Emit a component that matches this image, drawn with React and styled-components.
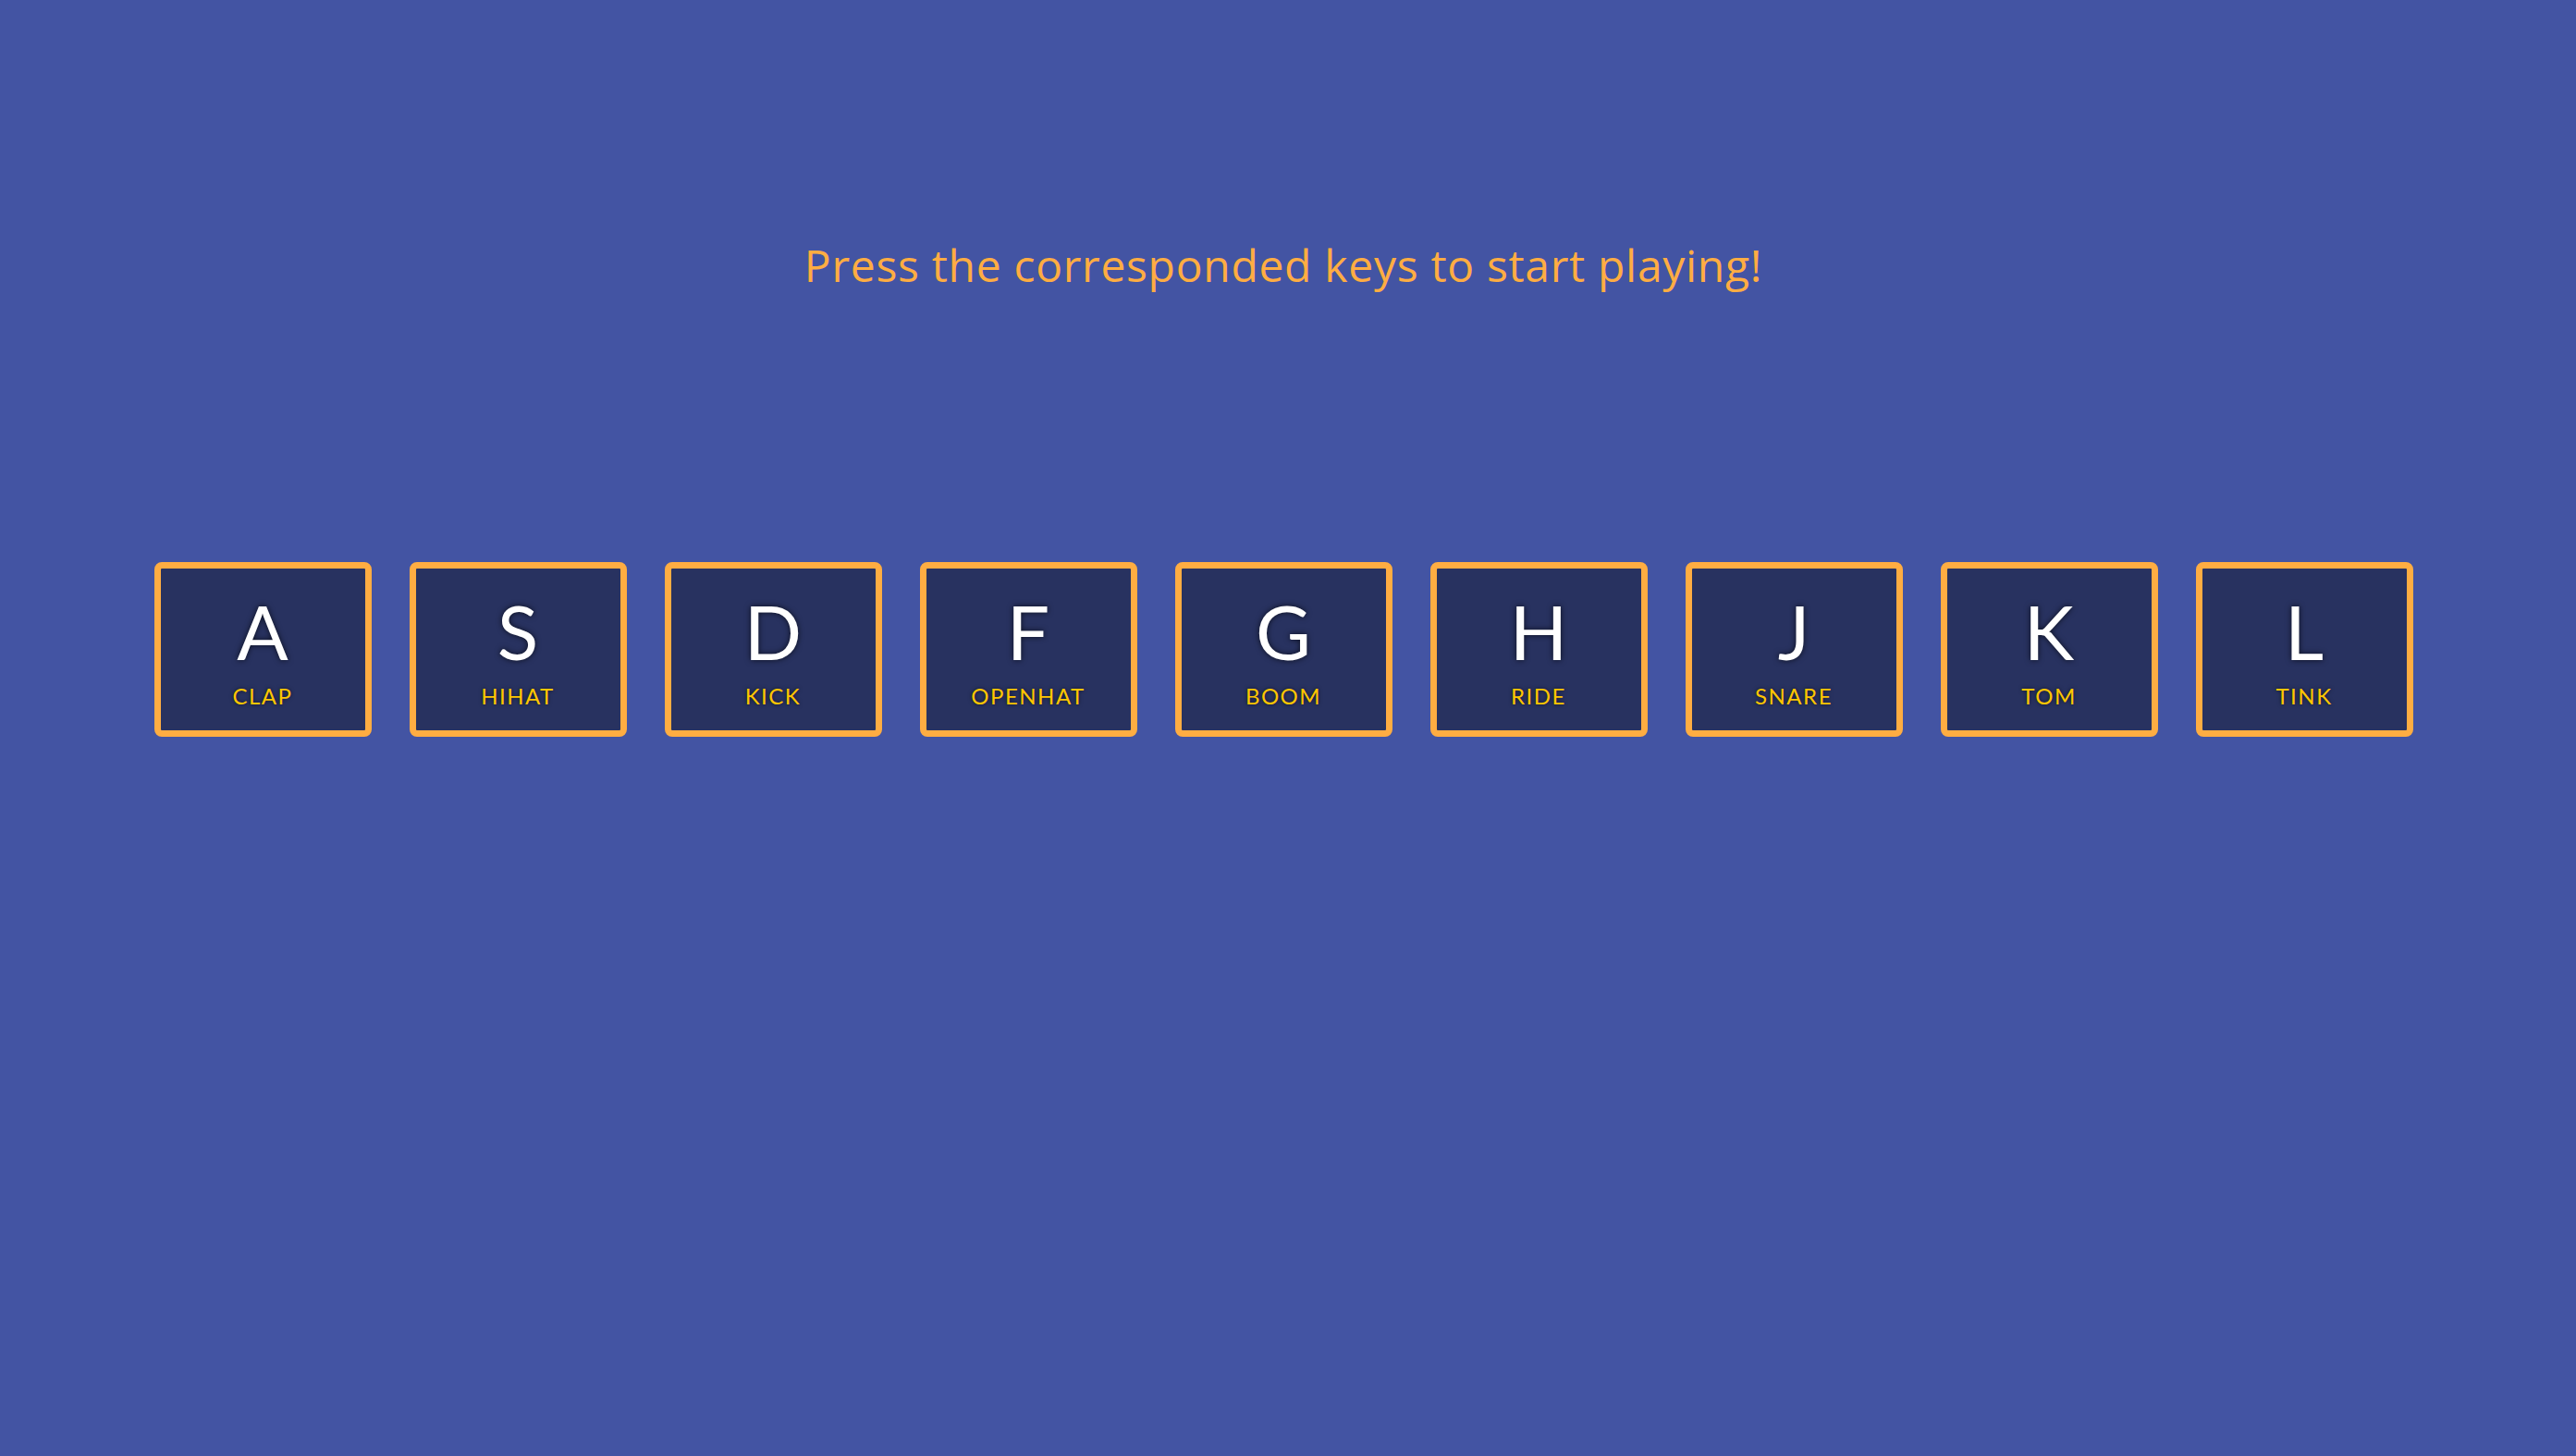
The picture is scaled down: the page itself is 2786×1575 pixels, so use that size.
import styled, { createGlobalStyle } from "styled-components";

const GlobalStyle = createGlobalStyle`
  html, body {
    margin: 0;
    padding: 0;
    background: #4354a3;
  }
  * {
    box-sizing: border-box;
  }
`;

const Page = styled.div`
  min-height: 100vh;
  display: flex;
  flex-direction: column;
  align-items: center;
  padding: 263px 10px 0 0;
  font-family: Lato, "Noto Sans", sans-serif;
`;

const Title = styled.h1`
  margin: 0;
  font-family: "Open Sans", Lato, sans-serif;
  font-weight: 400;
  font-size: 48px;
  line-height: 1;
  letter-spacing: 0.7px;
  color: #ffad42;
`;

const Keys = styled.div`
  display: flex;
  justify-content: center;
  gap: 41px;
  margin-top: 297px;
`;

const Key = styled.div`
  width: 235px;
  height: 189px;
  border: 7px solid #ffad42;
  border-radius: 8px;
  background: #283260;
  display: flex;
  flex-direction: column;
  align-items: center;
  padding-top: 26px;
  text-align: center;
`;

const Kbd = styled.kbd`
  font-family: Lato, sans-serif;
  font-size: 82px;
  line-height: 1;
  color: #fff;
  text-shadow: 0 0 6px rgba(0, 0, 0, 0.7);
`;

const Sound = styled.span`
  margin-top: 18px;
  font-size: 24px;
  line-height: 1;
  letter-spacing: 1.5px;
  text-transform: uppercase;
  color: #ffc600;
  text-shadow: 0 0 4px rgba(0, 0, 0, 0.6);
`;

const drums = [
  { key: "A", sound: "clap" },
  { key: "S", sound: "hihat" },
  { key: "D", sound: "kick" },
  { key: "F", sound: "openhat" },
  { key: "G", sound: "boom" },
  { key: "H", sound: "ride" },
  { key: "J", sound: "snare" },
  { key: "K", sound: "tom" },
  { key: "L", sound: "tink" },
];

const App = () => {
  return (
    <>
      <GlobalStyle />
      <Page>
        <Title>Press the corresponded keys to start playing!</Title>
        <Keys>
          {drums.map((d) => (
            <Key key={d.key}>
              <Kbd>{d.key}</Kbd>
              <Sound>{d.sound}</Sound>
            </Key>
          ))}
        </Keys>
      </Page>
    </>
  );
};

export default App;
